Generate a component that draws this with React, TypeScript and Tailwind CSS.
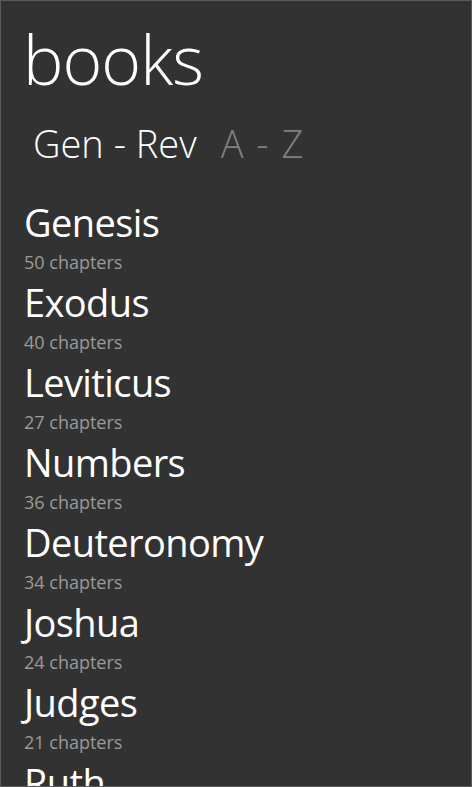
import React from 'react';

type Book = {
  name: string;
  chapters: number;
};

const books: Book[] = [
  { name: 'Genesis', chapters: 50 },
  { name: 'Exodus', chapters: 40 },
  { name: 'Leviticus', chapters: 27 },
  { name: 'Numbers', chapters: 36 },
  { name: 'Deuteronomy', chapters: 34 },
  { name: 'Joshua', chapters: 24 },
  { name: 'Judges', chapters: 21 },
  { name: 'Ruth', chapters: 4 },
];

export default function App() {
  return (
    <div className="h-[787px] w-[472px] overflow-hidden border border-[#5a5a5a] bg-[#323232] font-['Open_Sans',sans-serif] text-white">
      <div className="pl-[22px] pt-[18px]">
        <h1 className="text-[68px] font-[350] leading-[80px] tracking-[-1px]">books</h1>
      </div>

      <div className="mt-[20px] flex items-center pl-[32px] text-[38px] font-[350] leading-[48px]">
        <span className="text-white">Gen - Rev</span>
        <span className="ml-[24px] text-[#808080] [word-spacing:3px]">A - Z</span>
      </div>

      <ul className="mt-[31px] pl-[23px]">
        {books.map((book) => (
          <li key={book.name} className="flex flex-col">
            <span className="text-[38px] leading-[48px] tracking-[-0.6px]">{book.name}</span>
            <span className="text-[18px] leading-[32px] text-[#9a9a9a]">
              {book.chapters} chapters
            </span>
          </li>
        ))}
      </ul>
    </div>
  );
}
